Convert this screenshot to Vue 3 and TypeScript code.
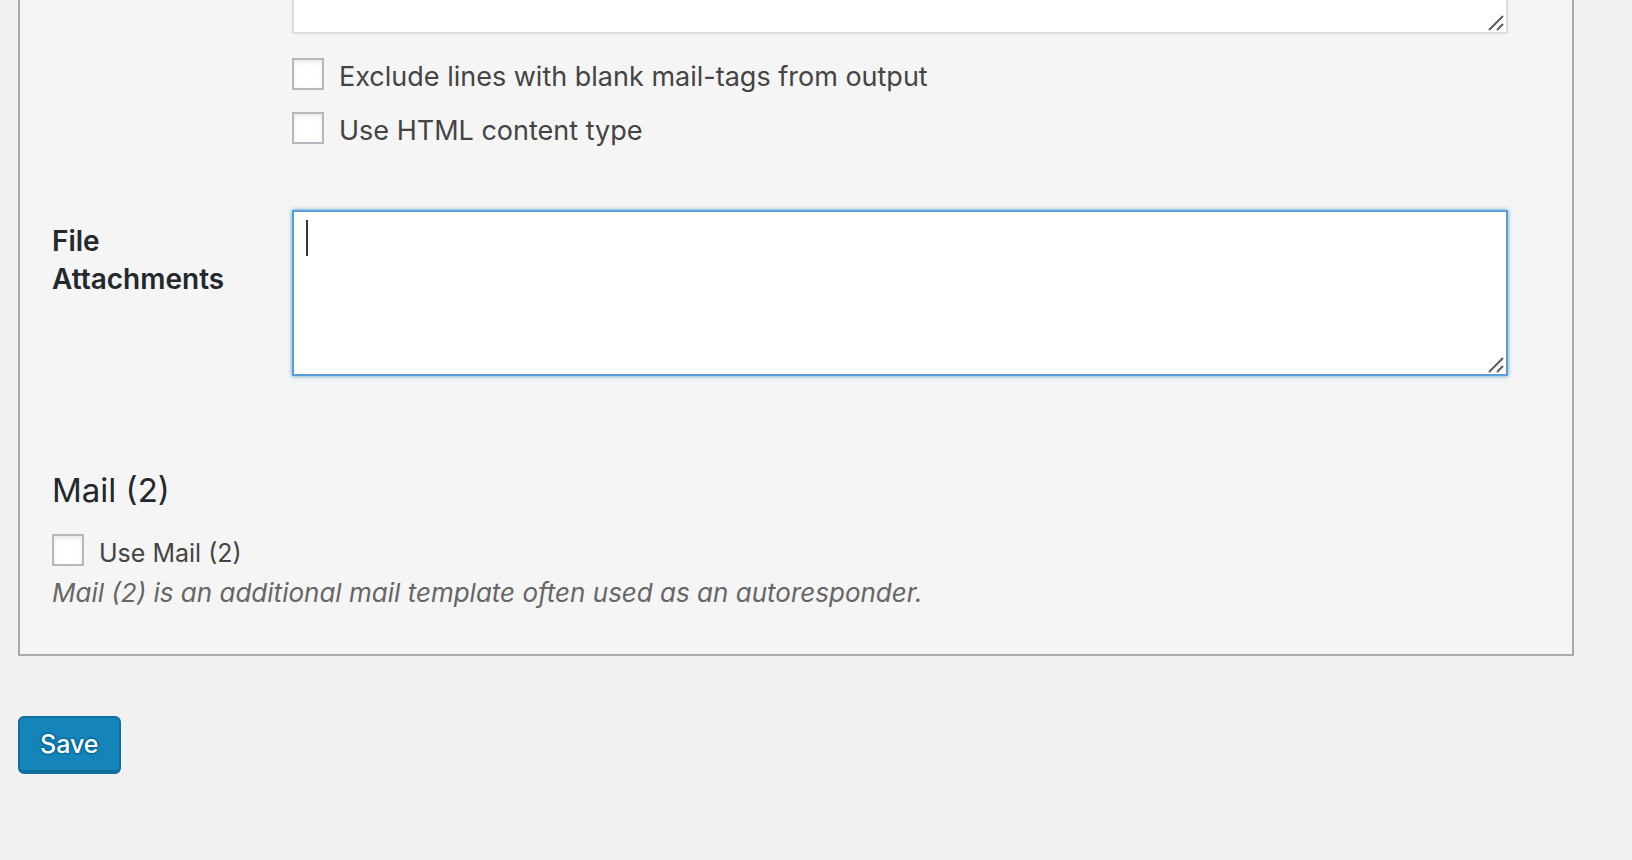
<script setup lang="ts">
import { ref } from 'vue'

const messageBody = ref('')
const attachments = ref('')
const excludeBlank = ref(false)
const useHtml = ref(false)
const useMail2 = ref(false)
</script>

<template>
  <form class="page" @submit.prevent>
    <section class="panel">
      <div class="row">
        <div class="field body-field">
          <div class="area">
            <textarea v-model="messageBody" class="box body-box" aria-label="Message body"></textarea>
            <svg class="grip" viewBox="0 0 16 16" aria-hidden="true">
              <path d="M1 15 15 1M9 15l6-6" />
            </svg>
          </div>
          <label class="check">
            <input v-model="excludeBlank" type="checkbox" />
            <span>Exclude lines with blank mail-tags from output</span>
          </label>
          <label class="check">
            <input v-model="useHtml" type="checkbox" />
            <span>Use HTML content type</span>
          </label>
        </div>
      </div>

      <div class="row attachments">
        <label class="heading" for="attachments">File Attachments</label>
        <div class="field area">
          <textarea id="attachments" v-model="attachments" class="box focused"></textarea>
          <span v-if="!attachments" class="caret"></span>
          <svg class="grip" viewBox="0 0 16 16" aria-hidden="true">
            <path d="M1 15 15 1M9 15l6-6" />
          </svg>
        </div>
      </div>

      <h2>Mail (2)</h2>
      <label class="check small">
        <input v-model="useMail2" type="checkbox" />
        <span>Use Mail (2)</span>
      </label>
      <p class="description">Mail (2) is an additional mail template often used as an autoresponder.</p>
    </section>

    <button class="save" type="submit">Save</button>
  </form>
</template>

<style>
html,
body {
  background: #f1f1f1;
}
</style>

<style scoped>
.page {
  box-sizing: border-box;
  padding: 0 58px 84px 18px;
  color: #444;
  font-family: Inter, "Liberation Sans", sans-serif;
  font-size: 27px;
}

.page * {
  box-sizing: border-box;
}

.panel {
  padding: 0 32px 42px;
  border: 2px solid #a9a9a9;
  border-top: 0;
  background: #f5f5f5;
}

.row {
  display: grid;
  grid-template-columns: 208px 1fr;
  column-gap: 32px;
  padding-right: 32px;
}

.field {
  grid-column: 2;
}

.area {
  position: relative;
}

.box {
  display: block;
  width: 100%;
  height: 166px;
  margin: 0;
  padding: 6px 12px;
  border: 2px solid #ddd;
  border-radius: 0;
  outline: none;
  background: #fff;
  color: #32373c;
  font: inherit;
  line-height: 40px;
  resize: none;
}

.body-box {
  height: 34px;
  padding: 0 12px;
  border-top: 0;
}

.focused {
  border-color: #5b9dd9;
  box-shadow: 0 0 4px rgba(30, 140, 190, 0.8);
  caret-color: transparent;
}

.caret {
  position: absolute;
  top: 10px;
  left: 14px;
  width: 2px;
  height: 36px;
  background: #32373c;
  pointer-events: none;
}

.grip {
  position: absolute;
  right: 4px;
  bottom: 3px;
  width: 16px;
  height: 16px;
  fill: none;
  stroke: #5c5c5c;
  stroke-width: 2;
  pointer-events: none;
}

.check {
  display: flex;
  align-items: flex-start;
  gap: 15px;
  width: fit-content;
  line-height: 38px;
}

.check input {
  flex: none;
  width: 32px;
  height: 32px;
  margin: 0;
  border: 2px solid #b4b9be;
  background: #fff;
  box-shadow: inset 0 2px 4px rgba(0, 0, 0, 0.1);
  appearance: none;
}

.check input:checked {
  background: #1e8cbe;
}

.body-field .check {
  margin-top: 16px;
}

.body-field .area + .check {
  margin-top: 24px;
}

.attachments {
  margin-top: 60px;
}

.heading {
  padding-top: 12px;
  color: #23282d;
  font-size: 28px;
  font-weight: 600;
  line-height: 38px;
}

h2 {
  margin: 92px 0 0;
  color: #23282d;
  font-size: 33px;
  font-weight: 400;
  line-height: 44px;
}

.small {
  margin-top: 22px;
  font-size: 25px;
}

.description {
  margin: 2px 0 0;
  color: #666;
  font-size: 26px;
  font-style: italic;
  line-height: 38px;
}

.save {
  display: block;
  height: 58px;
  margin-top: 60px;
  padding: 0 20px;
  border: 2px solid #0e6f9f;
  border-bottom-width: 4px;
  border-radius: 6px;
  background: #1585b9;
  color: #fff;
  font: 500 25px/52px Inter, "Liberation Sans", sans-serif;
  text-shadow: 0 -1px 2px #006799, 1px 0 2px #006799, 0 1px 2px #006799, -1px 0 2px #006799;
}
</style>
